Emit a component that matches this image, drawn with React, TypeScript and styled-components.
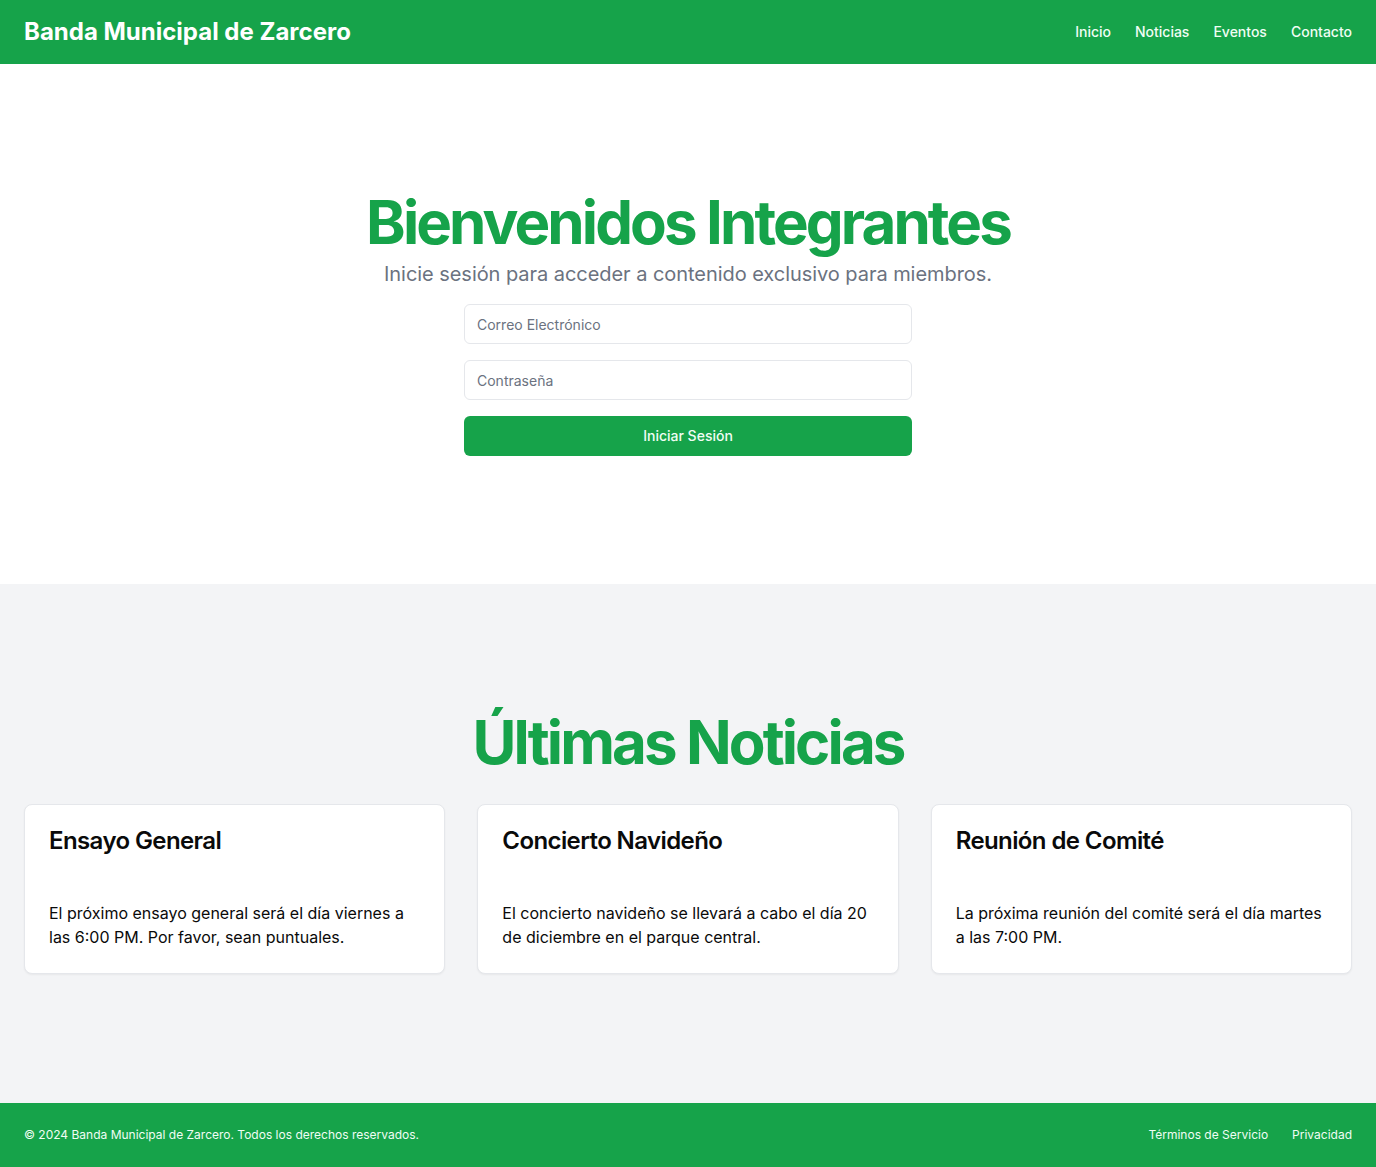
import React from "react"
import styled, { createGlobalStyle } from "styled-components"

const green = "#16a34a"

const GlobalStyle = createGlobalStyle`
  * { box-sizing: border-box; }
  body {
    margin: 0;
    font-family: Inter, "Noto Sans", sans-serif;
    color: #0a0a0a;
    background: #fff;
  }
  h1, h2, h3, p { margin: 0; }
`

const Page = styled.div`
  display: flex;
  flex-direction: column;
  min-height: 100vh;
`
const Header = styled.header`
  height: 64px;
  padding: 0 24px 1px;
  background: ${green};
  display: flex;
  align-items: center;
  justify-content: space-between;
`
const Brand = styled.a`
  color: #fff;
  font-size: 24px;
  line-height: 32px;
  font-weight: 700;
  text-decoration: none;
`
const Nav = styled.nav<{ $small?: boolean }>`
  display: flex;
  gap: 24px;
  a {
    color: #f0fdf4;
    text-decoration: none;
    font-size: ${({ $small }) => ($small ? "12px" : "14px")};
    font-weight: ${({ $small }) => ($small ? 400 : 500)};
  }
`
const Section = styled.section<{ $muted?: boolean }>`
  padding: 128px 24px ${({ $muted }) => ($muted ? "129px" : "128px")};
  background: ${({ $muted }) => ($muted ? "#f3f4f6" : "#fff")};
  display: flex;
  flex-direction: column;
  align-items: center;
`
const Heading = styled.h1`
  color: ${green};
  font-size: 60px;
  line-height: 1;
  font-weight: 700;
  letter-spacing: -2.9px;
  text-align: center;
`
const Lead = styled.p`
  margin-top: 8px;
  color: #6b7280;
  font-size: 20px;
  line-height: 28px;
  letter-spacing: -0.05px;
  text-align: center;
`
const Form = styled.form`
  margin-top: 16px;
  width: 448px;
  display: flex;
  flex-direction: column;
  gap: 16px;
`
const Input = styled.input`
  height: 40px;
  border: 1px solid #e5e7eb;
  border-radius: 6px;
  padding: 0 12px;
  font-family: inherit;
  font-size: 14px;
  background: #fff;
  &::placeholder { color: #6b7280; }
`
const Button = styled.button`
  height: 40px;
  border: none;
  border-radius: 6px;
  background: ${green};
  color: #f0fdf4;
  font-family: inherit;
  font-size: 14px;
  font-weight: 500;
  padding-bottom: 2px;
`
const Cards = styled.div`
  margin-top: 32px;
  width: 100%;
  display: grid;
  grid-template-columns: repeat(3, 1fr);
  gap: 32px;
`
const Card = styled.div`
  background: #fff;
  border: 1px solid #e5e7eb;
  border-radius: 8px;
  box-shadow: 0 1px 2px rgba(0, 0, 0, 0.05);
  padding: 24px;
`
const CardTitle = styled.h3`
  font-size: 24px;
  line-height: 24px;
  font-weight: 600;
  letter-spacing: -0.6px;
`
const CardText = styled.p`
  margin-top: 48px;
  font-size: 16px;
  line-height: 24px;
`
const Footer = styled.footer`
  height: 64px;
  padding: 0 24px 1px;
  background: ${green};
  display: flex;
  align-items: center;
  justify-content: space-between;
  color: #f0fdf4;
  font-size: 12px;
`

const news = [
  {
    title: "Ensayo General",
    text: "El próximo ensayo general será el día viernes a las 6:00 PM. Por favor, sean puntuales.",
  },
  {
    title: "Concierto Navideño",
    text: "El concierto navideño se llevará a cabo el día 20 de diciembre en el parque central.",
  },
  {
    title: "Reunión de Comité",
    text: "La próxima reunión del comité será el día martes a las 7:00 PM.",
  },
]

export default function App() {
  return (
    <Page>
      <GlobalStyle />
      <Header>
        <Brand href="#">Banda Municipal de Zarcero</Brand>
        <Nav>
          <a href="#">Inicio</a>
          <a href="#">Noticias</a>
          <a href="#">Eventos</a>
          <a href="#">Contacto</a>
        </Nav>
      </Header>
      <Section>
        <Heading>Bienvenidos Integrantes</Heading>
        <Lead>Inicie sesión para acceder a contenido exclusivo para miembros.</Lead>
        <Form onSubmit={e => e.preventDefault()}>
          <Input type="email" placeholder="Correo Electrónico" />
          <Input type="password" placeholder="Contraseña" />
          <Button type="submit">Iniciar Sesión</Button>
        </Form>
      </Section>
      <Section $muted>
        <Heading as="h2">Últimas Noticias</Heading>
        <Cards>
          {news.map(item => (
            <Card key={item.title}>
              <CardTitle>{item.title}</CardTitle>
              <CardText>{item.text}</CardText>
            </Card>
          ))}
        </Cards>
      </Section>
      <Footer>
        <span>© 2024 Banda Municipal de Zarcero. Todos los derechos reservados.</span>
        <Nav $small>
          <a href="#">Términos de Servicio</a>
          <a href="#">Privacidad</a>
        </Nav>
      </Footer>
    </Page>
  )
}
